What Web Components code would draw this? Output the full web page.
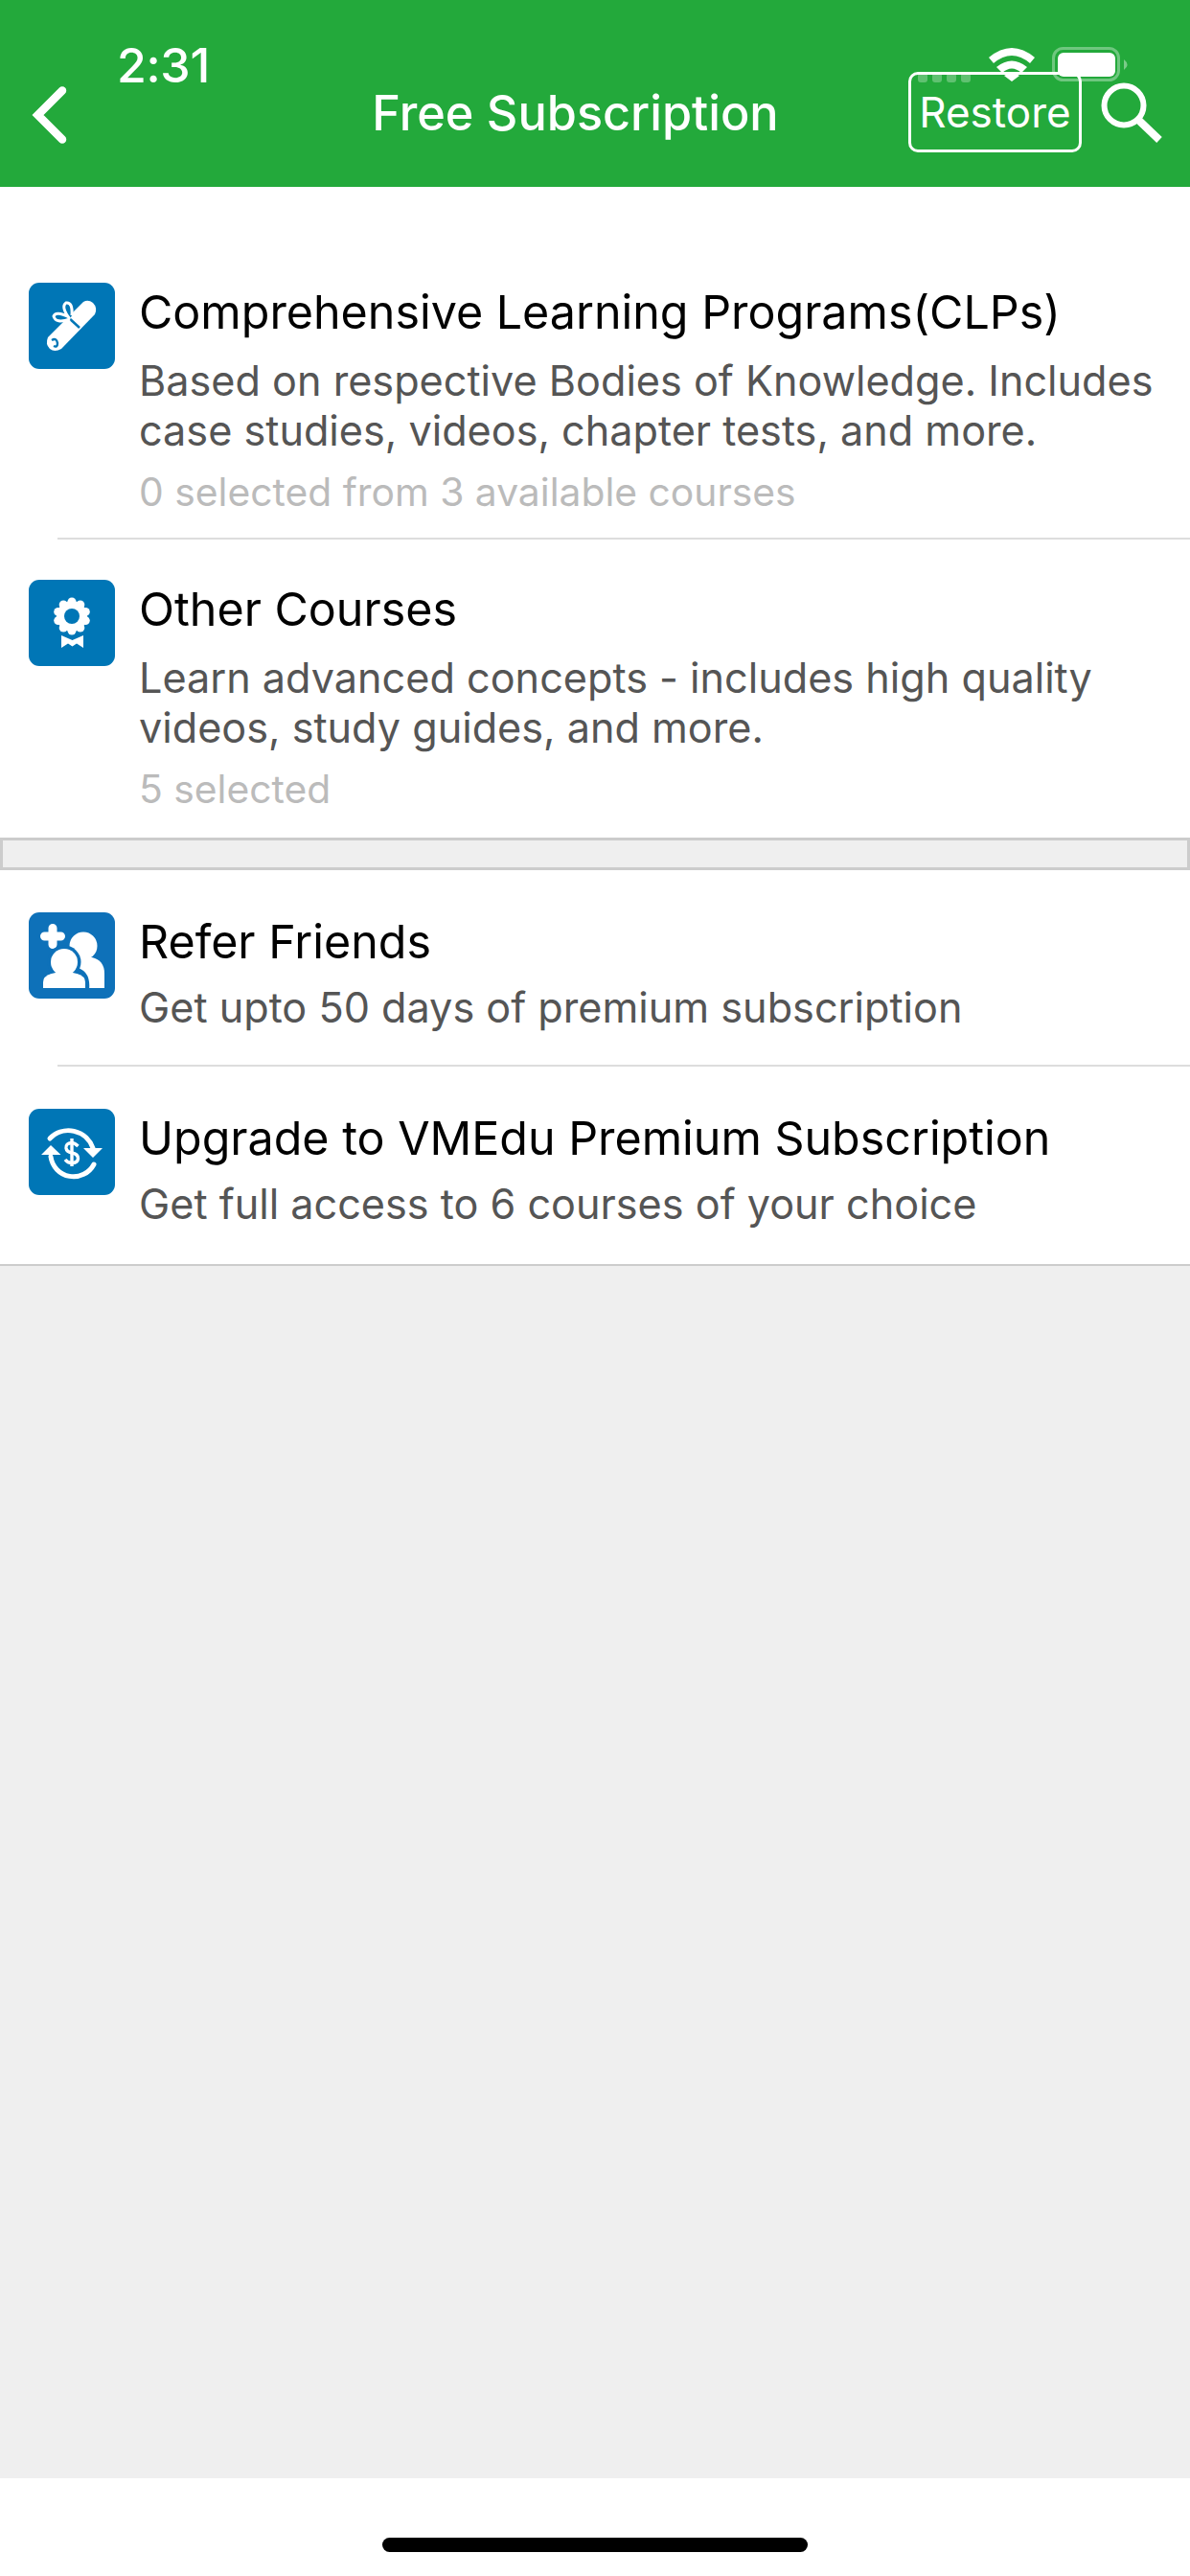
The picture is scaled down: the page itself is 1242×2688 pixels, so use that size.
<!DOCTYPE html>
<html lang="en"><head><meta charset="utf-8"><title>Free Subscription</title>
<style>
html,body{margin:0;padding:0;background:#fff}
body{font-family:Inter,"Noto Sans",sans-serif}
</style></head><body>
<app-screen>
  <nav-header slot="header" title="Free Subscription"></nav-header>
  <list-section first>
    <list-row icon="scroll" heading="Comprehensive Learning Programs(CLPs)" meta="0 selected from 3 available courses" divider>Based on respective Bodies of Knowledge. Includes<br>case studies, videos, chapter tests, and more.</list-row>
    <list-row icon="medal" heading="Other Courses" meta="5 selected">Learn advanced concepts - includes high quality<br>videos, study guides, and more.</list-row>
  </list-section>
  <section-gap></section-gap>
  <list-section last>
    <list-row icon="refer" heading="Refer Friends" divider>Get upto 50 days of premium subscription</list-row>
    <list-row icon="upgrade" heading="Upgrade to VMEdu Premium Subscription">Get full access to 6 courses of your choice</list-row>
  </list-section>
  <home-bar slot="footer"></home-bar>
</app-screen>
<script>
function tpl(html){const t=document.createElement('template');t.innerHTML=html;return t;}
class Base extends HTMLElement{
  constructor(){super();this.attachShadow({mode:'open'});}
}
const screenT=tpl(`<style>
:host{display:flex;flex-direction:column;width:1242px;height:2688px;background:#efefef;overflow:hidden}
main{flex:1;display:flex;flex-direction:column}
</style><slot name="header"></slot><main><slot></slot></main><slot name="footer"></slot>`);
customElements.define('app-screen',class extends Base{connectedCallback(){this.shadowRoot.appendChild(screenT.content.cloneNode(true));}});

const statusT=tpl(`<style>
:host{position:absolute;inset:0 0 auto 0;height:100px;display:block;color:#fff;pointer-events:none}
.bar{display:flex;align-items:flex-start;height:100px}
.time{font:500 50px/1 Inter,sans-serif;margin:43px 0 0 122px;letter-spacing:-.3px;width:836px;flex:none}
svg{display:block}
</style><div class="bar"><span class="time">2:31</span>
<svg width="250" height="100" viewBox="958 0 250 100">
  <g fill="#fff" fill-opacity=".28"><rect x="958" y="76" width="10" height="10" rx="3"/><rect x="973" y="76" width="10" height="10" rx="3"/><rect x="988" y="76" width="10" height="10" rx="3"/><rect x="1003" y="76" width="10" height="10" rx="3"/></g>
  <path d="M1032 60 Q1056 40 1080 60 L1075 66 Q1056 50 1037 66Z M1040 70 Q1056 57 1072 70 L1066 76 Q1056 67 1046 76Z M1048 79 Q1056 73 1064 79 L1056 85Z" fill="#fff"/>
  <rect x="1099.5" y="50.500" width="68" height="33" rx="10" fill="none" stroke="#fff" stroke-opacity=".35" stroke-width="3"/>
  <rect x="1104" y="55" width="60" height="25" rx="6" fill="#fff"/>
  <path d="M1173 62 Q1180 67.500 1173 73Z" fill="#fff" fill-opacity=".4"/>
</svg></div>`);
customElements.define('status-bar',class extends Base{connectedCallback(){this.shadowRoot.appendChild(statusT.content.cloneNode(true));}});

const navT=tpl(`<style>
:host{display:block;position:relative;height:195px;background:#23a93b;color:#fff;flex:none}
.row{display:flex;align-items:flex-start;height:195px;box-sizing:border-box;padding:75px 32px 0 33px}
.back{width:38px;height:60px;margin-top:15px;flex:none}
h1{flex:none;box-sizing:border-box;width:877px;padding-left:182px;text-align:center;margin:13px 0 0 0;font:500 50.4px/1.2 Inter,sans-serif}
.restore{box-sizing:border-box;flex:none;width:181px;height:84px;border:3px solid #fff;border-radius:10px;display:flex;align-items:center;justify-content:center;font:400 44px/1 Inter,sans-serif}
.search{width:64px;height:64px;margin:11px 0 0 20px;flex:none}
svg{display:block}
</style><div class="row">
<svg class="back" viewBox="0 0 38 60"><path d="M32 4.500 L6.500 30 L32 55.500" fill="none" stroke="#fff" stroke-width="8.500" stroke-linecap="round"/></svg>
<h1></h1><span class="restore">Restore</span>
<svg class="search" viewBox="0 0 64 64"><circle cx="24" cy="24" r="20.500" fill="none" stroke="#fff" stroke-width="6"/><path d="M38.500 38.500 L61 60" stroke="#fff" stroke-width="8"/></svg>
</div><status-bar></status-bar>`);
customElements.define('nav-header',class extends Base{connectedCallback(){const c=navT.content.cloneNode(true);c.querySelector('h1').textContent=this.getAttribute('title');this.removeAttribute('title');this.shadowRoot.appendChild(c);}});

const secT=tpl(`<style>
:host{display:block;background:#fff;flex:none}
:host([first]){padding-top:58px}
:host([last]){border-bottom:2px solid #ccc;--row-top:44px;--sub-gap:11px;--spacer:22px}
</style><slot></slot>`);
customElements.define('list-section',class extends Base{connectedCallback(){this.shadowRoot.appendChild(secT.content.cloneNode(true));}});

const gapT=tpl(`<style>:host{display:block;box-sizing:border-box;height:34px;background:#efefef;border:3px solid #ccc;flex:none}</style>`);
customElements.define('section-gap',class extends Base{connectedCallback(){this.shadowRoot.appendChild(gapT.content.cloneNode(true));}});

const petals=Array.from({length:10},(_,i)=>{const a=i*Math.PI/5-Math.PI/2;return `<circle cx="${(45+15*Math.cos(a)).toFixed(1)}" cy="${(38+15*Math.sin(a)).toFixed(1)}" r="4.500"/>`;}).join('');
const ICONS={
scroll:`<path d="M20 57 L57 20 Q62 17 67 21 Q72 26 69 33 L34 69 Q27 73 22 69 Q17 64 20 57Z" fill="#fff"/>
<path d="M24 60 Q29 57 30 63 Q30 68 26 66" fill="none" stroke="#0076b6" stroke-width="2.400"/>
<path d="M41 36 L53 47" stroke="#0076b6" stroke-width="2.500"/>
<path d="M43 38 Q33 25 39 21 Q46 20 45 34 M43 38 Q28 43 26 35 Q28 29 42 36" fill="#0076b6" stroke="#fff" stroke-width="3"/>`,
medal:`<g fill="#fff"><circle cx="45" cy="38" r="16"/>${petals}</g>
<circle cx="45" cy="38" r="8" fill="#0076b6"/>
<path d="M34 58 L42 61.500 L45.500 63 L49 61.500 L57 58 V71 L50 66.500 L45.500 69.500 L41 66.500 L34 71Z" fill="#fff"/>`,
refer:`<path d="M25 16.500 V33.500 M16.500 25 H33.500" stroke="#fff" stroke-width="9" stroke-linecap="round"/>
<circle cx="57" cy="35" r="14.500" fill="#fff"/>
<path d="M50 47 H66 Q79 50 79 64 V79 H44 V50Z" fill="#fff"/>
<circle cx="37" cy="52" r="17.500" fill="#0e71b9"/>
<path d="M20 70 Q30 54 51 58 Q65 62 63 81 H30Z" fill="#0e71b9"/>
<circle cx="37" cy="52" r="14" fill="#fff"/>
<path d="M15 79 V73 Q15 65 28 63 H46 Q59 65 59 73 V79Z" fill="#fff"/>`,
upgrade:`<g fill="none" stroke="#fff" stroke-width="5" stroke-linecap="round"><path d="M22 31 A27 27 0 0 1 67 41"/><path d="M23 50 A24 24 0 0 0 68 58"/></g>
<path d="M23 38 L33.500 48 L13 48Z M67 51 L57 41 L77 41Z" fill="#fff"/>
<g fill="none" stroke="#fff" stroke-width="3.400"><path d="M51.500 39 Q48 35.500 44.500 35.500 Q38.500 36 39 41 Q39.500 45 45 46 Q51.500 47 51.500 52 Q51 56.500 45 56.500 Q40.500 56.500 38 53"/><path d="M45 31 V60"/></g>`
};
const rowT=tpl(`<style>
:host{display:block}
.row{display:flex;padding:var(--row-top,42px) 0 0 30px;box-sizing:border-box}
.icon{width:90px;height:90px;border-radius:11px;flex:none;background:#0076b6;display:block}
.icon.refer{background:#0e71b9}
.txt{flex:1;margin-left:25px;padding-bottom:12px;min-width:0}
h2{margin:0;font:400 48.4px/62px Inter,sans-serif;color:#000}
p{margin:var(--sub-gap,14px) 0 0;font:400 43.2px/52px Inter,sans-serif;color:#555;white-space:nowrap}
p.meta{margin:12px 0 10px;font:400 40.8px/52px Inter,sans-serif;color:#bbb}
p.meta:empty{margin:0;height:var(--spacer,24px)}
.rule{height:2px;background:#ddd;margin-left:60px}
.nodiv .rule{background:transparent;height:0}
.nodiv .txt{padding-bottom:15px}
</style><div class="wrap"><div class="row"><svg class="icon" viewBox="0 0 90 90"></svg><div class="txt"><h2></h2><p><slot></slot></p><p class="meta"></p></div></div><div class="rule"></div></div>`);
customElements.define('list-row',class extends Base{connectedCallback(){
 const c=rowT.content.cloneNode(true),n=this.getAttribute('icon');
 const s=c.querySelector('svg');s.innerHTML=ICONS[n];s.classList.add(n);
 c.querySelector('h2').textContent=this.getAttribute('heading');
 c.querySelector('.meta').textContent=this.getAttribute('meta')||'';
 if(!this.hasAttribute('divider'))c.querySelector('.wrap').classList.add('nodiv');
 this.shadowRoot.appendChild(c);}});

const homeT=tpl(`<style>
:host{display:flex;height:102px;background:#fff;justify-content:center;align-items:flex-start;flex:none}
div{width:444px;height:15px;border-radius:8px;background:#000;margin-top:62px}
</style><div></div>`);
customElements.define('home-bar',class extends Base{connectedCallback(){this.shadowRoot.appendChild(homeT.content.cloneNode(true));}});
</script>
</body></html>
